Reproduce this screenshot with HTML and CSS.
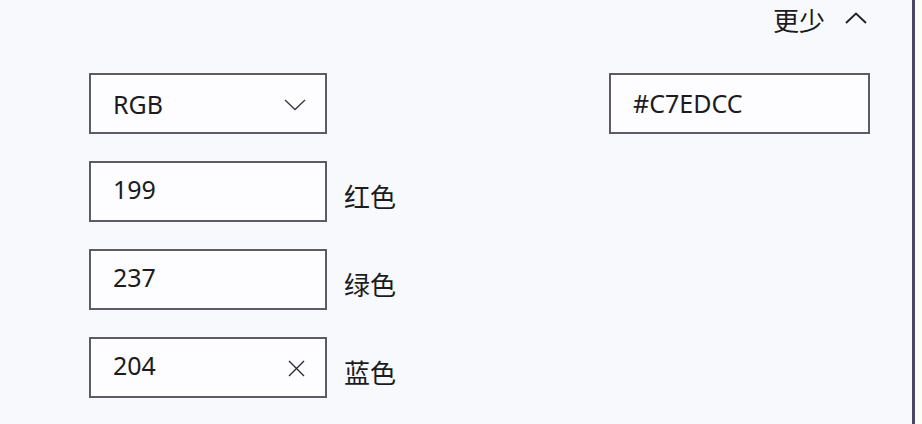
FILE: index.html
```html
<!DOCTYPE html>
<html lang="zh-CN">
<head>
<meta charset="utf-8">
<title>Color picker</title>
<link rel="stylesheet" href="styles.css">
</head>
<body>
<div class="screen">
  <div class="panel">
    <div class="topbar">
      <div class="more"><span class="more-text">更少</span>
        <svg class="chev-up" width="22" height="12" viewBox="0 0 22 12"><polyline points="1,11 11,1.5 21,11" fill="none" stroke="#1e1e24" stroke-width="1.8"/></svg>
      </div>
    </div>
    <div class="grid">
      <div class="box select"><span class="val">RGB</span>
        <svg class="chev-down" width="22" height="12" viewBox="0 0 22 12"><polyline points="1,1 11,10.5 21,1" fill="none" stroke="#3a3a44" stroke-width="1.4"/></svg>
      </div>
      <div></div>
      <div class="box hex"><span class="val">#C7EDCC</span></div>

      <div class="box num"><span class="val">199</span></div>
      <div class="label">红色</div>
      <div></div>

      <div class="box num"><span class="val">237</span></div>
      <div class="label">绿色</div>
      <div></div>

      <div class="box num"><span class="val">204</span>
        <svg class="clear" width="17" height="17" viewBox="0 0 17 17"><path d="M1 1 L16 16 M16 1 L1 16" fill="none" stroke="#2a2a32" stroke-width="1.4"/></svg>
      </div>
      <div class="label">蓝色</div>
      <div></div>
    </div>
  </div>
  <div class="divider"></div>
  <div class="outside"></div>
</div>
</body>
</html>
```

FILE: styles.css
```css
html, body {
  margin: 0;
  padding: 0;
}
body {
  font-family: "Noto Sans", "Open Sans", "Noto Sans CJK SC", sans-serif;
  color: #1b1b20;
  background: #f8f9fc;
}
.screen {
  width: 922px;
  height: 424px;
  display: flex;
  overflow: hidden;
}
.panel {
  width: 912px;
  flex: none;
  background: #f8f9fc;
  padding: 0 42px 0 89px;
  box-sizing: border-box;
}
.divider {
  width: 3px;
  flex: none;
  background: #4a4963;
}
.outside {
  flex: 1;
  background: #fcfcf8;
}
.topbar {
  height: 73px;
  box-sizing: border-box;
  padding: 2px 3px 0 0;
  display: flex;
  justify-content: flex-end;
  align-items: flex-start;
}
.more {
  display: flex;
  align-items: center;
  gap: 20px;
  height: 36px;
}
.more-text {
  font-family: "Noto Sans CJK SC", sans-serif;
  font-size: 26px;
  line-height: 36px;
}
.chev-up {
  margin-top: -4px;
}
.grid {
  display: grid;
  grid-template-columns: 238px 1fr 261px;
  grid-auto-rows: 61px;
  row-gap: 27px;
}
.box {
  box-sizing: border-box;
  height: 61px;
  border: 2px solid #5c5b66;
  background: #fdfdff;
  display: flex;
  align-items: center;
  justify-content: space-between;
  padding: 0 19px 0 22px;
  font-size: 25px;
}
.box .val {
  line-height: 30px;
}
.num .val {
  margin-top: -6px;
}
.hex .val {
  margin-top: -2px;
}
.chev-down {
  margin-top: 2px;
}
.clear {
  margin-right: 1px;
  margin-top: 2px;
}
.label {
  font-family: "Noto Sans CJK SC", sans-serif;
  font-size: 26px;
  padding-left: 17px;
  display: flex;
  align-items: center;
  padding-top: 8px;
}
```
